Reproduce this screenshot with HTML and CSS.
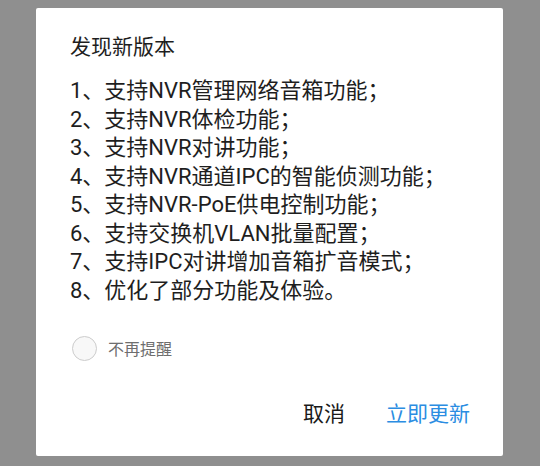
FILE: index.html
```html
<!DOCTYPE html>
<html lang="zh-CN">
<head>
<meta charset="utf-8">
<link rel="stylesheet" href="styles.css">
</head>
<body>
<div class="screen">
  <div class="dialog">
    <div class="title">发现新版本</div>
    <div class="list">
      <div class="item">1、支持NVR管理网络音箱功能；</div>
      <div class="item">2、支持NVR体检功能；</div>
      <div class="item">3、支持NVR对讲功能；</div>
      <div class="item">4、支持NVR通道IPC的智能侦测功能；</div>
      <div class="item">5、支持NVR-PoE供电控制功能；</div>
      <div class="item">6、支持交换机VLAN批量配置；</div>
      <div class="item">7、支持IPC对讲增加音箱扩音模式；</div>
      <div class="item">8、优化了部分功能及体验。</div>
    </div>
    <div class="check">
      <span class="circle"></span>
      <span class="check-label">不再提醒</span>
    </div>
    <div class="actions">
      <span class="btn btn-cancel">取消</span>
      <span class="btn btn-ok">立即更新</span>
    </div>
  </div>
</div>
</body>
</html>
```

FILE: styles.css
```css
html, body {
  margin: 0;
  padding: 0;
  background: #8f8f8f;
}
body {
  font-family: Roboto, "Noto Sans CJK SC", sans-serif;
}
.screen {
  width: 540px;
  height: 466px;
  padding: 8px 0 0 36px;
  box-sizing: border-box;
}
.dialog {
  width: 467px;
  height: 448px;
  box-sizing: border-box;
  background: #ffffff;
  border-radius: 2px;
  padding: 24px 33px 0 34px;
  display: flex;
  flex-direction: column;
}
.title {
  font-size: 21px;
  line-height: 30px;
  color: #1e1e1e;
}
.list {
  margin-top: 15px;
}
.item {
  font-size: 22px;
  line-height: 28.5px;
  color: #1e1e1e;
  white-space: nowrap;
}
.check {
  margin-top: 30px;
  display: flex;
  align-items: center;
  height: 26px;
}
.circle {
  width: 23px;
  height: 23px;
  border: 1.5px solid #cccccc;
  border-radius: 50%;
  background: #f8f8f8;
  margin-left: 2px;
}
.check-label {
  margin-left: 11px;
  font-size: 16px;
  color: #6e6e6e;
}
.actions {
  margin-top: 33px;
  display: flex;
  justify-content: flex-end;
  align-items: center;
  gap: 41px;
  height: 40px;
}
.btn {
  font-size: 21px;
  line-height: 40px;
}
.btn-cancel {
  color: #1a1a1a;
}
.btn-ok {
  color: #2b8de2;
}
```
